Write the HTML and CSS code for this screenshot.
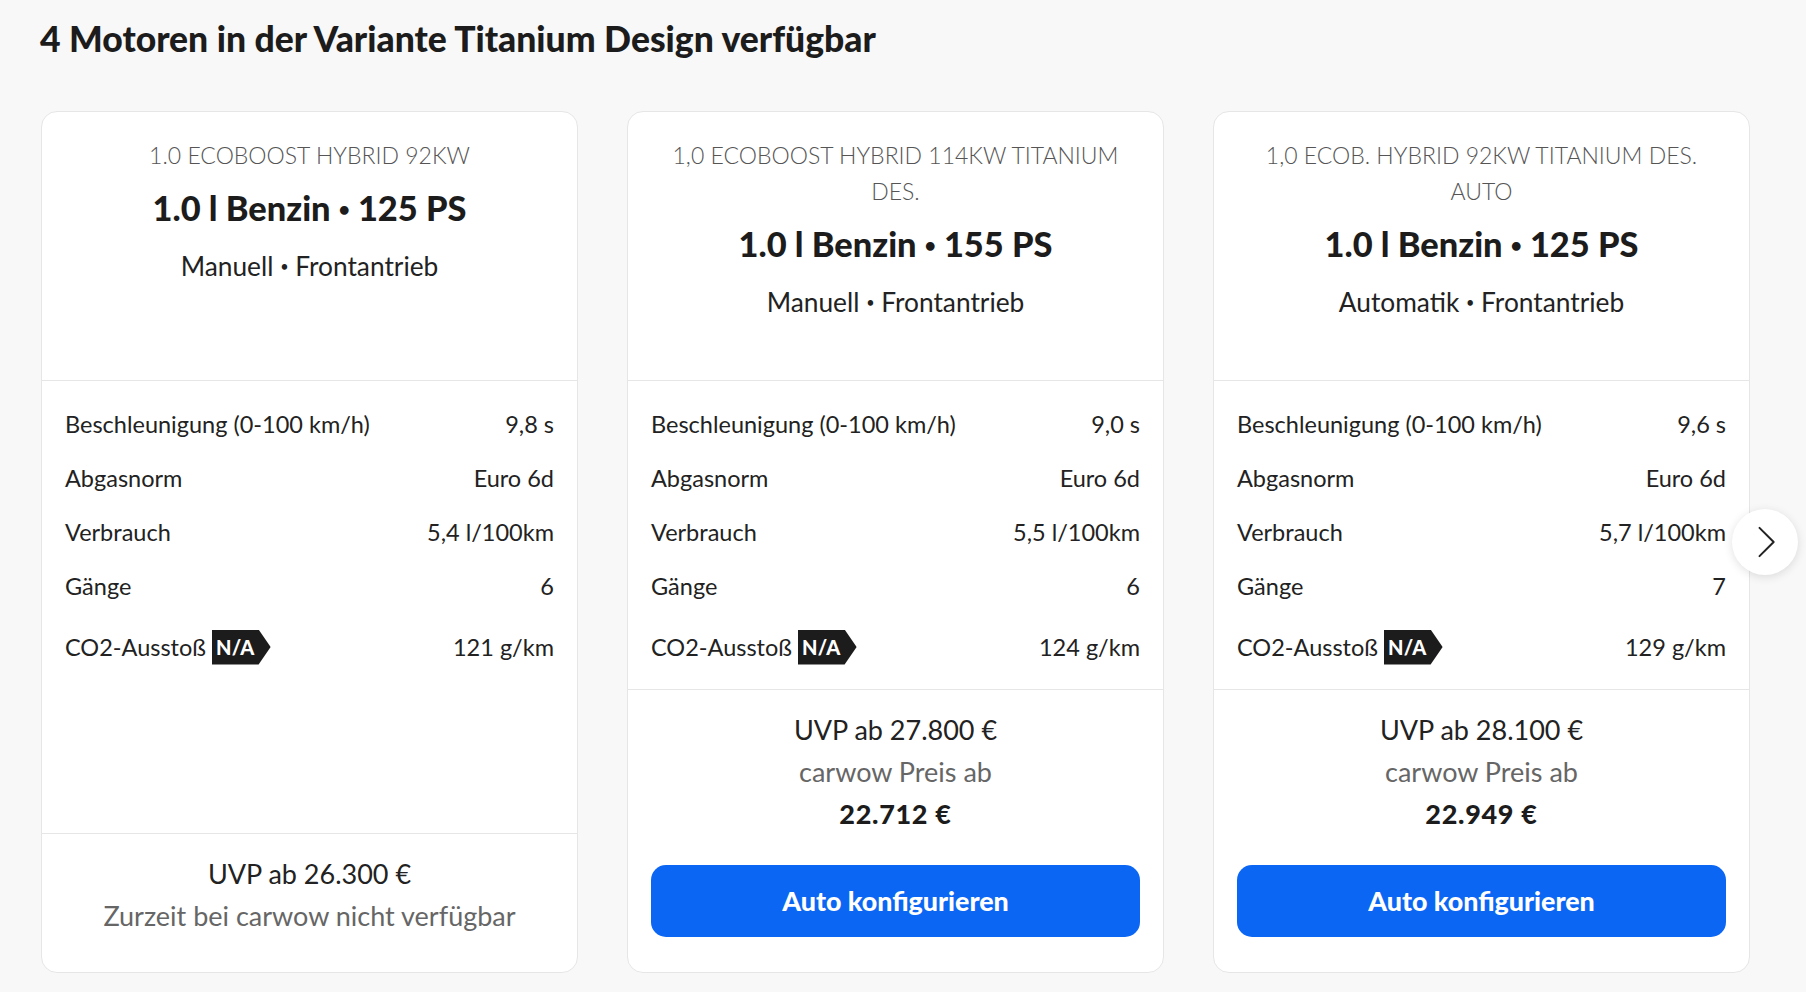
FILE: index.html
```html
<!DOCTYPE html>
<html lang="de">
<head>
<meta charset="utf-8">
<title>Motoren</title>
<link rel="stylesheet" href="styles.css">
</head>
<body>
<main class="page">
  <h1 class="heading">4 Motoren in der Variante Titanium Design verfügbar</h1>
  <div class="carousel">
    <div class="track">
      <article class="card">
        <header class="card-head">
          <p class="trim">1.0 ECOBOOST HYBRID 92KW</p>
          <h2 class="engine">1.0 l Benzin <span class="dot">•</span> 125 PS</h2>
          <p class="drive">Manuell <span class="dot">•</span> Frontantrieb</p>
        </header>
        <dl class="specs">
          <div class="row"><dt>Beschleunigung (0-100 km/h)</dt><dd>9,8 s</dd></div>
          <div class="row"><dt>Abgasnorm</dt><dd>Euro 6d</dd></div>
          <div class="row"><dt>Verbrauch</dt><dd>5,4 l/100km</dd></div>
          <div class="row"><dt>Gänge</dt><dd>6</dd></div>
          <div class="row co2"><dt>CO2-Ausstoß <span class="badge">N/A</span></dt><dd>121 g/km</dd></div>
        </dl>
        <div class="price">
          <p class="uvp">UVP ab 26.300 €</p>
          <p class="muted">Zurzeit bei carwow nicht verfügbar</p>
        </div>
      </article>

      <article class="card">
        <header class="card-head">
          <p class="trim">1,0 ECOBOOST HYBRID 114KW TITANIUM DES.</p>
          <h2 class="engine">1.0 l Benzin <span class="dot">•</span> 155 PS</h2>
          <p class="drive">Manuell <span class="dot">•</span> Frontantrieb</p>
        </header>
        <dl class="specs">
          <div class="row"><dt>Beschleunigung (0-100 km/h)</dt><dd>9,0 s</dd></div>
          <div class="row"><dt>Abgasnorm</dt><dd>Euro 6d</dd></div>
          <div class="row"><dt>Verbrauch</dt><dd>5,5 l/100km</dd></div>
          <div class="row"><dt>Gänge</dt><dd>6</dd></div>
          <div class="row co2"><dt>CO2-Ausstoß <span class="badge">N/A</span></dt><dd>124 g/km</dd></div>
        </dl>
        <div class="price">
          <p class="uvp">UVP ab 27.800 €</p>
          <p class="muted">carwow Preis ab</p>
          <p class="deal">22.712 €</p>
          <a class="cta" href="#">Auto konfigurieren</a>
        </div>
      </article>

      <article class="card">
        <header class="card-head">
          <p class="trim">1,0 ECOB. HYBRID 92KW TITANIUM DES. AUTO</p>
          <h2 class="engine">1.0 l Benzin <span class="dot">•</span> 125 PS</h2>
          <p class="drive">Automatik <span class="dot">•</span> Frontantrieb</p>
        </header>
        <dl class="specs">
          <div class="row"><dt>Beschleunigung (0-100 km/h)</dt><dd>9,6 s</dd></div>
          <div class="row"><dt>Abgasnorm</dt><dd>Euro 6d</dd></div>
          <div class="row"><dt>Verbrauch</dt><dd>5,7 l/100km</dd></div>
          <div class="row"><dt>Gänge</dt><dd>7</dd></div>
          <div class="row co2"><dt>CO2-Ausstoß <span class="badge">N/A</span></dt><dd>129 g/km</dd></div>
        </dl>
        <div class="price">
          <p class="uvp">UVP ab 28.100 €</p>
          <p class="muted">carwow Preis ab</p>
          <p class="deal">22.949 €</p>
          <a class="cta" href="#">Auto konfigurieren</a>
        </div>
      </article>
    </div>
    <button class="next" type="button" aria-label="Weiter">
      <svg viewBox="0 0 24 40" width="20" height="34" aria-hidden="true"><path d="M3 3 L20 20 L3 37" fill="none" stroke="#222" stroke-width="2.4" stroke-linecap="round" stroke-linejoin="round"/></svg>
    </button>
  </div>
</main>
</body>
</html>
```
FILE: styles.css
```css
* { box-sizing: border-box; }
body {
  margin: 0;
  background: #f8f8f8;
  font-family: "Lato", "Liberation Sans", sans-serif;
  color: #222;
}
.page { padding: 17px 0 0 40px; }
.heading {
  margin: 0;
  font-size: 35.5px;
  line-height: 44px;
  font-weight: 900;
  color: #1c1c1c;
}
.carousel { position: relative; margin-top: 50px; }
.track { display: flex; gap: 49px; padding-left: 1px; align-items: stretch; }
.card {
  width: 537px;
  flex: 0 0 537px;
  height: 862px;
  background: #fff;
  border: 1px solid #e6e6e6;
  border-radius: 16px;
  display: flex;
  flex-direction: column;
}
.card-head {
  height: 269px;
  border-bottom: 1px solid #e6e6e6;
  padding: 25px 30px 0;
  text-align: center;
}
.trim { margin: 0; font-size: 23px; line-height: 36px; font-weight: 300; color: #555; }
.engine { margin: 15px 0 0; font-size: 34.4px; line-height: 40px; font-weight: 900; color: #1c1c1c; }
.drive { margin: 20px 0 0; font-size: 26.3px; line-height: 34px; color: #222; }
.dot { font-size: 0.55em; vertical-align: 0.25em; }
.specs {
  margin: 0;
  flex: 1;
  padding: 16px 23px 7px;
  border-bottom: 1px solid #e6e6e6;
}
.row {
  display: flex;
  justify-content: space-between;
  align-items: center;
  height: 54px;
  font-size: 23.5px;
}
.row.co2 { height: 68px; }
.row dt, .row dd { margin: 0; display: flex; align-items: center; }
.badge {
  display: inline-flex;
  align-items: center;
  margin-left: 6px;
  height: 35px;
  padding: 0 16px 0 4px;
  background: #1c1c1c;
  color: #fff;
  font-size: 20px;
  font-weight: 900;
  letter-spacing: 0.3px;
  clip-path: polygon(0 0, calc(100% - 12px) 0, 100% 50%, calc(100% - 12px) 100%, 0 100%);
}
.price {
  padding: 19px 23px 35px;
  text-align: center;
  font-size: 27px;
}
.price p { margin: 0; line-height: 42px; }
.muted { color: #666; }
.deal { font-weight: 900; color: #1c1c1c; letter-spacing: 0.7px; }
.cta {
  display: flex;
  align-items: center;
  justify-content: center;
  margin-top: 30px;
  height: 72px;
  border-radius: 15px;
  background: #0b66f4;
  color: #fff;
  font-size: 26.8px;
  font-weight: 900;
  text-decoration: none;
}
.next {
  position: absolute;
  left: 1692px;
  top: 398px;
  width: 66px;
  height: 66px;
  border: none;
  border-radius: 50%;
  background: #fff;
  box-shadow: 0 2px 10px rgba(0,0,0,0.12);
  display: flex;
  align-items: center;
  justify-content: center;
  padding: 0 0 0 4px;
}
```
